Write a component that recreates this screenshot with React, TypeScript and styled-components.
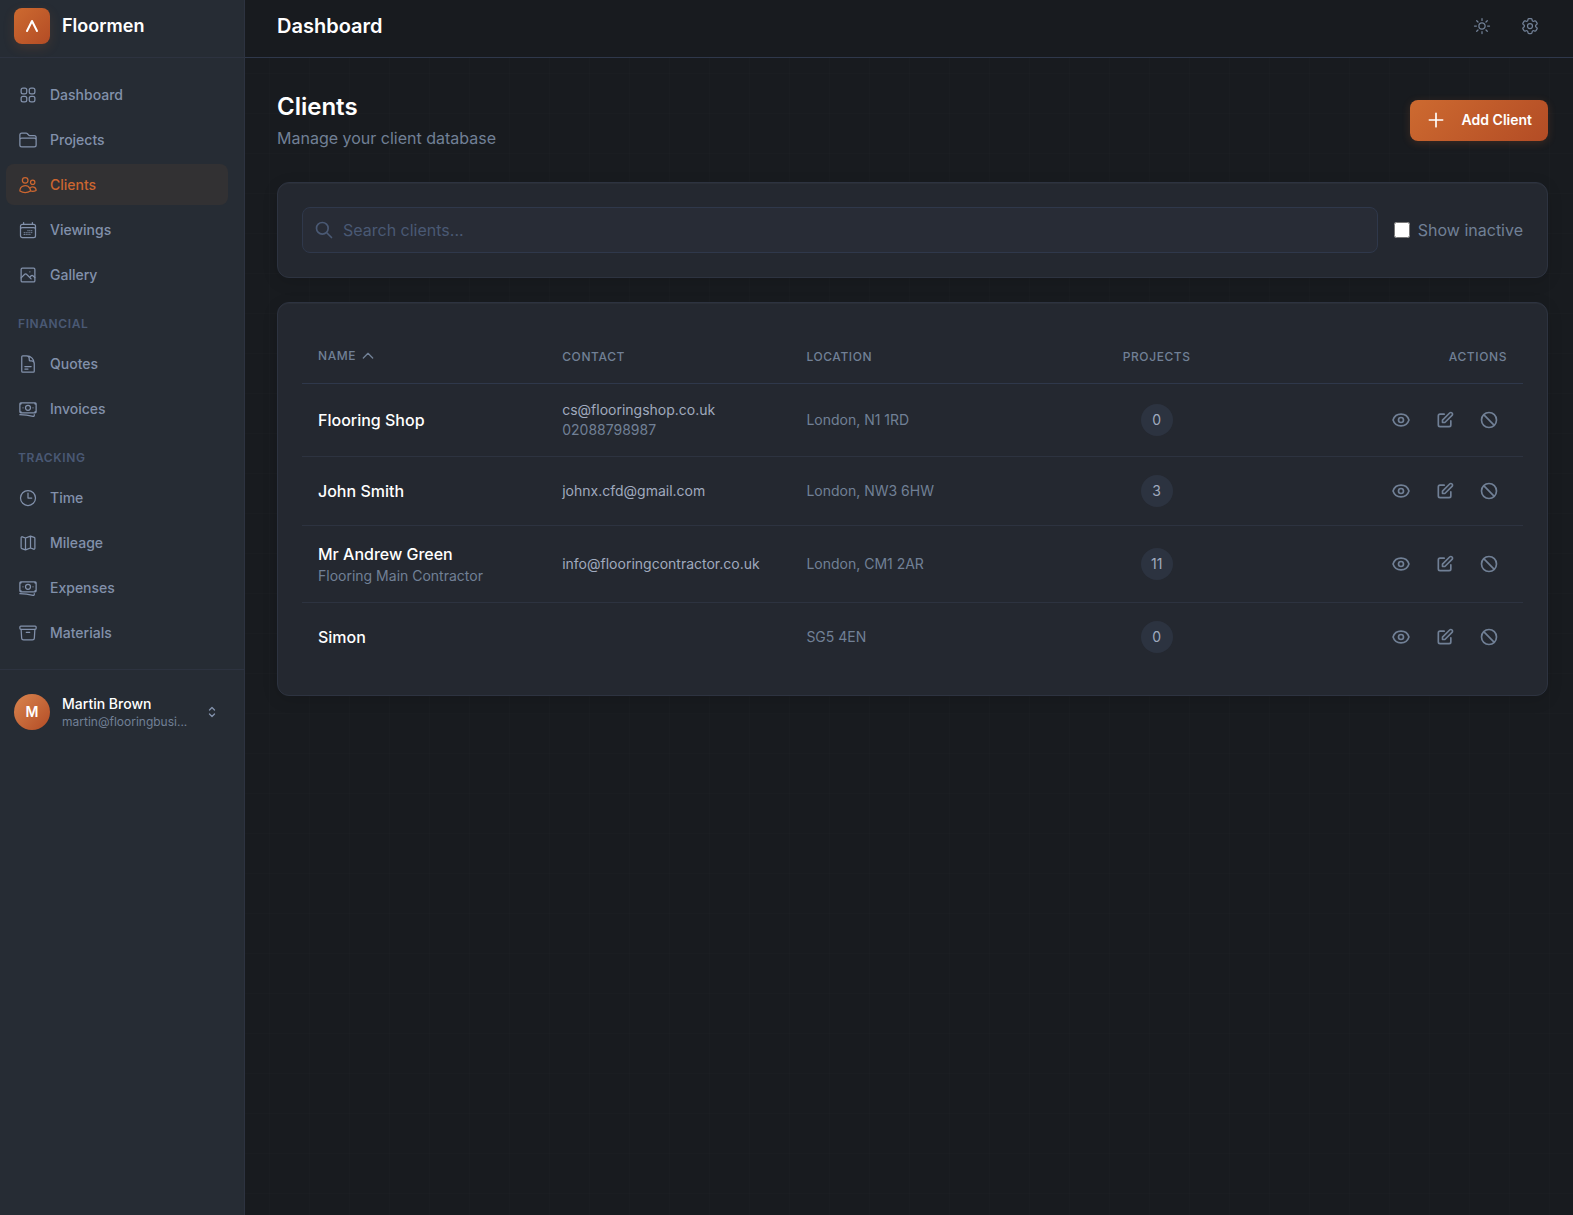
import React from 'react';
import styled, { createGlobalStyle, css } from 'styled-components';
import {
  HiOutlineSquares2X2,
  HiOutlineFolder,
  HiOutlineUsers,
  HiOutlineCalendarDays,
  HiOutlineDocumentText,
  HiOutlineBanknotes,
  HiOutlineClock,
  HiOutlineArchiveBox,
  HiOutlineSun,
  HiOutlineCog6Tooth,
  HiOutlineChevronUpDown,
} from 'react-icons/hi2';
import {
  HiOutlineEye,
  HiOutlinePencilAlt,
  HiOutlineBan,
  HiOutlineSearch,
  HiOutlinePlus,
  HiOutlineChevronUp,
} from 'react-icons/hi';

const color = {
  page: '#181b1f',
  sidebar: '#262c34',
  card: '#242830',
  field: '#282c36',
  line: '#2d3340',
  lineStrong: '#2f384b',
  muted: '#718096',
  nav: '#8291ab',
  soft: '#a0aabe',
  faint: '#4a5974',
  white: '#ffffff',
  accent: '#cc6630',
};

const GlobalStyle = createGlobalStyle`
  *, *::before, *::after { box-sizing: border-box; }
  body {
    margin: 0;
    background: ${color.page};
    color: ${color.white};
    font-family: Inter, "Liberation Sans", sans-serif;
    font-size: 16px;
    line-height: 24px;
  }
  button, input { font: inherit; color: inherit; }
  button { border: 0; background: none; padding: 0; cursor: pointer; }
  h1, h2, p { margin: 0; }
`;

const Shell = styled.div`
  display: grid;
  grid-template-columns: 245px minmax(0, 1fr);
  min-height: 100vh;
`;

const Sidebar = styled.aside`
  background: ${color.sidebar};
  border-right: 1px solid ${color.line};
`;

const Brand = styled.div`
  display: flex;
  align-items: center;
  gap: 12px;
  height: 58px;
  padding: 8px 14px 13px;
  border-bottom: 1px solid ${color.line};
  font-size: 18px;
  line-height: 26px;
  font-weight: 600;
`;

const BrandMark = styled.span`
  display: grid;
  place-items: center;
  width: 36px;
  height: 36px;
  border-radius: 8px;
  background: linear-gradient(135deg, #cd6a30, #b34c25);
  box-shadow: 0 4px 12px rgba(205, 106, 48, 0.15);
`;

const Nav = styled.nav`
  padding: 16px 16px 12px 6px;
`;

const NavGroup = styled.h2`
  padding: 16px 12px 10px;
  font-size: 12px;
  line-height: 18px;
  font-weight: 600;
  letter-spacing: 0.05em;
  text-transform: uppercase;
  color: ${color.faint};
`;

const NavLink = styled.a<{ $active?: boolean }>`
  display: flex;
  align-items: center;
  gap: 12px;
  height: 41px;
  margin-bottom: 4px;
  padding: 0 12px;
  border-radius: 8px;
  font-size: 14px;
  font-weight: 500;
  text-decoration: none;
  color: ${color.nav};
  ${(p) =>
    p.$active &&
    css`
      color: ${color.accent};
      background: #323133;
    `}
  svg {
    flex: none;
    width: 20px;
    height: 20px;
  }
`;

const Account = styled.button`
  display: flex;
  align-items: center;
  gap: 12px;
  width: 100%;
  padding: 24px 24px 24px 14px;
  border-top: 1px solid ${color.line};
  text-align: left;
  color: ${color.nav};
`;

const Avatar = styled.span`
  display: grid;
  place-items: center;
  flex: none;
  width: 36px;
  height: 36px;
  border-radius: 50%;
  background: linear-gradient(135deg, #d9854f, #b34c25);
  color: ${color.white};
  font-size: 14px;
  font-weight: 600;
`;

const AccountText = styled.span`
  flex: 1;
  min-width: 0;
`;

const AccountName = styled.span`
  display: block;
  font-size: 14px;
  line-height: 20px;
  font-weight: 500;
  color: ${color.white};
`;

const AccountMail = styled.span`
  display: block;
  overflow: hidden;
  text-overflow: ellipsis;
  white-space: nowrap;
  font-size: 12px;
  line-height: 16px;
  color: ${color.muted};
`;

const Main = styled.div`
  background-color: ${color.page};
  background-image: linear-gradient(rgba(255, 255, 255, 0.006) 1px, transparent 1px),
    linear-gradient(90deg, rgba(255, 255, 255, 0.006) 1px, transparent 1px);
  background-size: 40px 40px;
  background-position: 24px 33px;
`;

const TopBar = styled.header`
  display: flex;
  align-items: center;
  justify-content: space-between;
  height: 58px;
  padding: 8px 25px 13px 32px;
  background: ${color.page};
  border-bottom: 1px solid ${color.lineStrong};
`;

const TopTitle = styled.h1`
  font-size: 20px;
  font-weight: 600;
`;

const TopActions = styled.div`
  display: flex;
  gap: 12px;
`;

const IconButton = styled.button`
  display: grid;
  place-items: center;
  width: 36px;
  height: 36px;
  border-radius: 8px;
  color: ${color.muted};
  svg {
    width: 20px;
    height: 20px;
  }
`;

const Content = styled.main`
  display: flex;
  flex-direction: column;
  gap: 24px;
  padding: 32px 25px 32px 32px;
`;

const PageHead = styled.div`
  display: flex;
  align-items: center;
  justify-content: space-between;
  margin-bottom: 8px;
`;

const PageTitle = styled.h2`
  margin-bottom: 2px;
  font-size: 24px;
  line-height: 34px;
  font-weight: 600;
`;

const PageLead = styled.p`
  color: ${color.muted};
`;

const PrimaryButton = styled.button`
  display: flex;
  align-items: center;
  gap: 16px;
  height: 41px;
  padding: 0 16px;
  border-radius: 8px;
  background: linear-gradient(135deg, #cd6a30, #b34c25);
  box-shadow: 0 2px 8px rgba(205, 106, 48, 0.2);
  font-size: 14px;
  font-weight: 600;
  svg {
    width: 20px;
    height: 20px;
  }
`;

const Card = styled.section`
  padding: 24px;
  border: 1px solid ${color.line};
  border-radius: 12px;
  background: ${color.card};
  box-shadow: 0 4px 16px rgba(0, 0, 0, 0.12), inset 0 1px 0 rgba(255, 255, 255, 0.03);
`;

const Filters = styled.div`
  display: flex;
  align-items: center;
  gap: 16px;
`;

const SearchField = styled.label`
  display: flex;
  flex: 1;
  align-items: center;
  gap: 9px;
  height: 46px;
  padding: 0 11px;
  border: 1px solid ${color.lineStrong};
  border-radius: 8px;
  background: ${color.field};
  color: ${color.faint};
  svg {
    flex: none;
    width: 20px;
    height: 20px;
  }
`;

const SearchInput = styled.input`
  flex: 1;
  min-width: 0;
  padding: 0;
  border: 0;
  outline: 0;
  background: transparent;
  color: ${color.white};
  &::placeholder {
    color: ${color.faint};
    opacity: 1;
  }
`;

const Toggle = styled.label`
  display: flex;
  align-items: center;
  gap: 8px;
  color: ${color.muted};
`;

const Checkbox = styled.input`
  width: 16px;
  height: 16px;
  margin: 0;
`;

const Table = styled.table`
  width: 100%;
  table-layout: fixed;
  border-collapse: separate;
  border-spacing: 0;
`;

type Align = 'left' | 'center' | 'right';

const HeadCell = styled.th<{ $align?: Align }>`
  height: 57px;
  padding: 20px 16px 16px;
  border-bottom: 1px solid ${color.lineStrong};
  font-size: 12px;
  line-height: 20px;
  font-weight: 500;
  letter-spacing: 0.05em;
  text-transform: uppercase;
  text-align: ${(p) => p.$align ?? 'left'};
  vertical-align: top;
  color: ${color.muted};
`;

const SortButton = styled.button`
  display: flex;
  align-items: center;
  gap: 4px;
  line-height: 18px;
  letter-spacing: inherit;
  text-transform: inherit;
  svg {
    width: 16px;
    height: 16px;
  }
`;

const Cell = styled.td<{ $align?: Align }>`
  padding: 16px;
  border-bottom: 1px solid ${color.line};
  font-size: 14px;
  line-height: 20px;
  text-align: ${(p) => p.$align ?? 'left'};
  color: ${color.muted};
  tr:last-child > & {
    border-bottom: 0;
  }
`;

const ClientName = styled.div`
  font-size: 16px;
  line-height: 24px;
  font-weight: 500;
  color: ${color.white};
`;

const Email = styled.div`
  color: ${color.soft};
`;

const Count = styled.span`
  display: inline-grid;
  place-items: center;
  width: 32px;
  height: 32px;
  border-radius: 50%;
  vertical-align: middle;
  background: #2c3340;
  color: ${color.soft};
`;

const RowActions = styled.div`
  display: flex;
  justify-content: flex-end;
  gap: 8px;
`;

const GalleryIcon = () => (
  <svg viewBox="0 0 24 24" fill="none" stroke="currentColor" strokeWidth="1.5" strokeLinecap="round" strokeLinejoin="round" aria-hidden="true">
    <rect x="3.75" y="3.75" width="16.5" height="16.5" rx="1.5" />
    <path d="M3.75 15.5l4-4.1a1.9 1.9 0 012.8 0l5.2 5.3M14.25 14.5l1.2-1.3a1.9 1.9 0 012.8 0l2 2M14.25 8.1h.01" />
  </svg>
);

const MapIcon = () => (
  <svg viewBox="0 0 24 24" fill="none" stroke="currentColor" strokeWidth="1.5" strokeLinecap="round" strokeLinejoin="round" aria-hidden="true">
    <path d="M9 6v14.25M15 3.75V18M9 20.25l-4.4-1.5a1.25 1.25 0 01-.85-1.2V5.6a1.1 1.1 0 011.45-1.05L9 6l6-2.25 4.4 1.5c.5.17.85.65.85 1.2V18.4a1.1 1.1 0 01-1.45 1.05L15 18l-6 2.25z" />
  </svg>
);

const BrandIcon = () => (
  <svg width="20" height="20" viewBox="0 0 20 20" fill="none" stroke="#fff" strokeWidth="2" strokeLinecap="round" strokeLinejoin="round" aria-hidden="true">
    <path d="M5 15L10 5l5 10" />
  </svg>
);

type NavEntry = { label: string; icon: React.ComponentType; active?: boolean };

const navGroups: { title?: string; items: NavEntry[] }[] = [
  {
    items: [
      { label: 'Dashboard', icon: HiOutlineSquares2X2 },
      { label: 'Projects', icon: HiOutlineFolder },
      { label: 'Clients', icon: HiOutlineUsers, active: true },
      { label: 'Viewings', icon: HiOutlineCalendarDays },
      { label: 'Gallery', icon: GalleryIcon },
    ],
  },
  {
    title: 'Financial',
    items: [
      { label: 'Quotes', icon: HiOutlineDocumentText },
      { label: 'Invoices', icon: HiOutlineBanknotes },
    ],
  },
  {
    title: 'Tracking',
    items: [
      { label: 'Time', icon: HiOutlineClock },
      { label: 'Mileage', icon: MapIcon },
      { label: 'Expenses', icon: HiOutlineBanknotes },
      { label: 'Materials', icon: HiOutlineArchiveBox },
    ],
  },
];

type Client = {
  name: string;
  company?: string;
  email?: string;
  phone?: string;
  location: string;
  projects: number;
};

const clients: Client[] = [
  { name: 'Flooring Shop', email: 'cs@flooringshop.co.uk', phone: '02088798987', location: 'London, N1 1RD', projects: 0 },
  { name: 'John Smith', email: 'johnx.cfd@gmail.com', location: 'London, NW3 6HW', projects: 3 },
  { name: 'Mr Andrew Green', company: 'Flooring Main Contractor', email: 'info@flooringcontractor.co.uk', location: 'London, CM1 2AR', projects: 11 },
  { name: 'Simon', location: 'SG5 4EN', projects: 0 },
];

export default function App() {
  return (
    <>
      <GlobalStyle />
      <Shell>
        <Sidebar>
          <Brand>
            <BrandMark>
              <BrandIcon />
            </BrandMark>
            Floormen
          </Brand>
          <Nav>
            {navGroups.map((group) => (
              <React.Fragment key={group.title ?? 'main'}>
                {group.title && <NavGroup>{group.title}</NavGroup>}
                {group.items.map(({ label, icon: Icon, active }) => (
                  <NavLink key={label} href="#" $active={active}>
                    <Icon />
                    {label}
                  </NavLink>
                ))}
              </React.Fragment>
            ))}
          </Nav>
          <Account type="button">
            <Avatar>M</Avatar>
            <AccountText>
              <AccountName>Martin Brown</AccountName>
              <AccountMail>martin@flooringbusi...</AccountMail>
            </AccountText>
            <HiOutlineChevronUpDown size={16} strokeWidth={2} />
          </Account>
        </Sidebar>
        <Main>
          <TopBar>
            <TopTitle>Dashboard</TopTitle>
            <TopActions>
              <IconButton type="button" aria-label="Toggle theme">
                <HiOutlineSun />
              </IconButton>
              <IconButton type="button" aria-label="Settings">
                <HiOutlineCog6Tooth />
              </IconButton>
            </TopActions>
          </TopBar>
          <Content>
            <PageHead>
              <div>
                <PageTitle>Clients</PageTitle>
                <PageLead>Manage your client database</PageLead>
              </div>
              <PrimaryButton type="button">
                <HiOutlinePlus />
                Add Client
              </PrimaryButton>
            </PageHead>
            <Card>
              <Filters>
                <SearchField>
                  <HiOutlineSearch />
                  <SearchInput type="text" placeholder="Search clients..." aria-label="Search clients" />
                </SearchField>
                <Toggle>
                  <Checkbox type="checkbox" />
                  Show inactive
                </Toggle>
              </Filters>
            </Card>
            <Card>
              <Table>
                <thead>
                  <tr>
                    <HeadCell>
                      <SortButton type="button">
                        Name
                        <HiOutlineChevronUp />
                      </SortButton>
                    </HeadCell>
                    <HeadCell>Contact</HeadCell>
                    <HeadCell>Location</HeadCell>
                    <HeadCell $align="center">Projects</HeadCell>
                    <HeadCell $align="right">Actions</HeadCell>
                  </tr>
                </thead>
                <tbody>
                  {clients.map((c) => (
                    <tr key={c.name}>
                      <Cell>
                        <ClientName>{c.name}</ClientName>
                        {c.company}
                      </Cell>
                      <Cell>
                        {c.email && <Email>{c.email}</Email>}
                        {c.phone}
                      </Cell>
                      <Cell>{c.location}</Cell>
                      <Cell $align="center">
                        <Count>{c.projects}</Count>
                      </Cell>
                      <Cell>
                        <RowActions>
                          <IconButton type="button" aria-label={`View ${c.name}`}>
                            <HiOutlineEye />
                          </IconButton>
                          <IconButton type="button" aria-label={`Edit ${c.name}`}>
                            <HiOutlinePencilAlt />
                          </IconButton>
                          <IconButton type="button" aria-label={`Deactivate ${c.name}`}>
                            <HiOutlineBan />
                          </IconButton>
                        </RowActions>
                      </Cell>
                    </tr>
                  ))}
                </tbody>
              </Table>
            </Card>
          </Content>
        </Main>
      </Shell>
    </>
  );
}
